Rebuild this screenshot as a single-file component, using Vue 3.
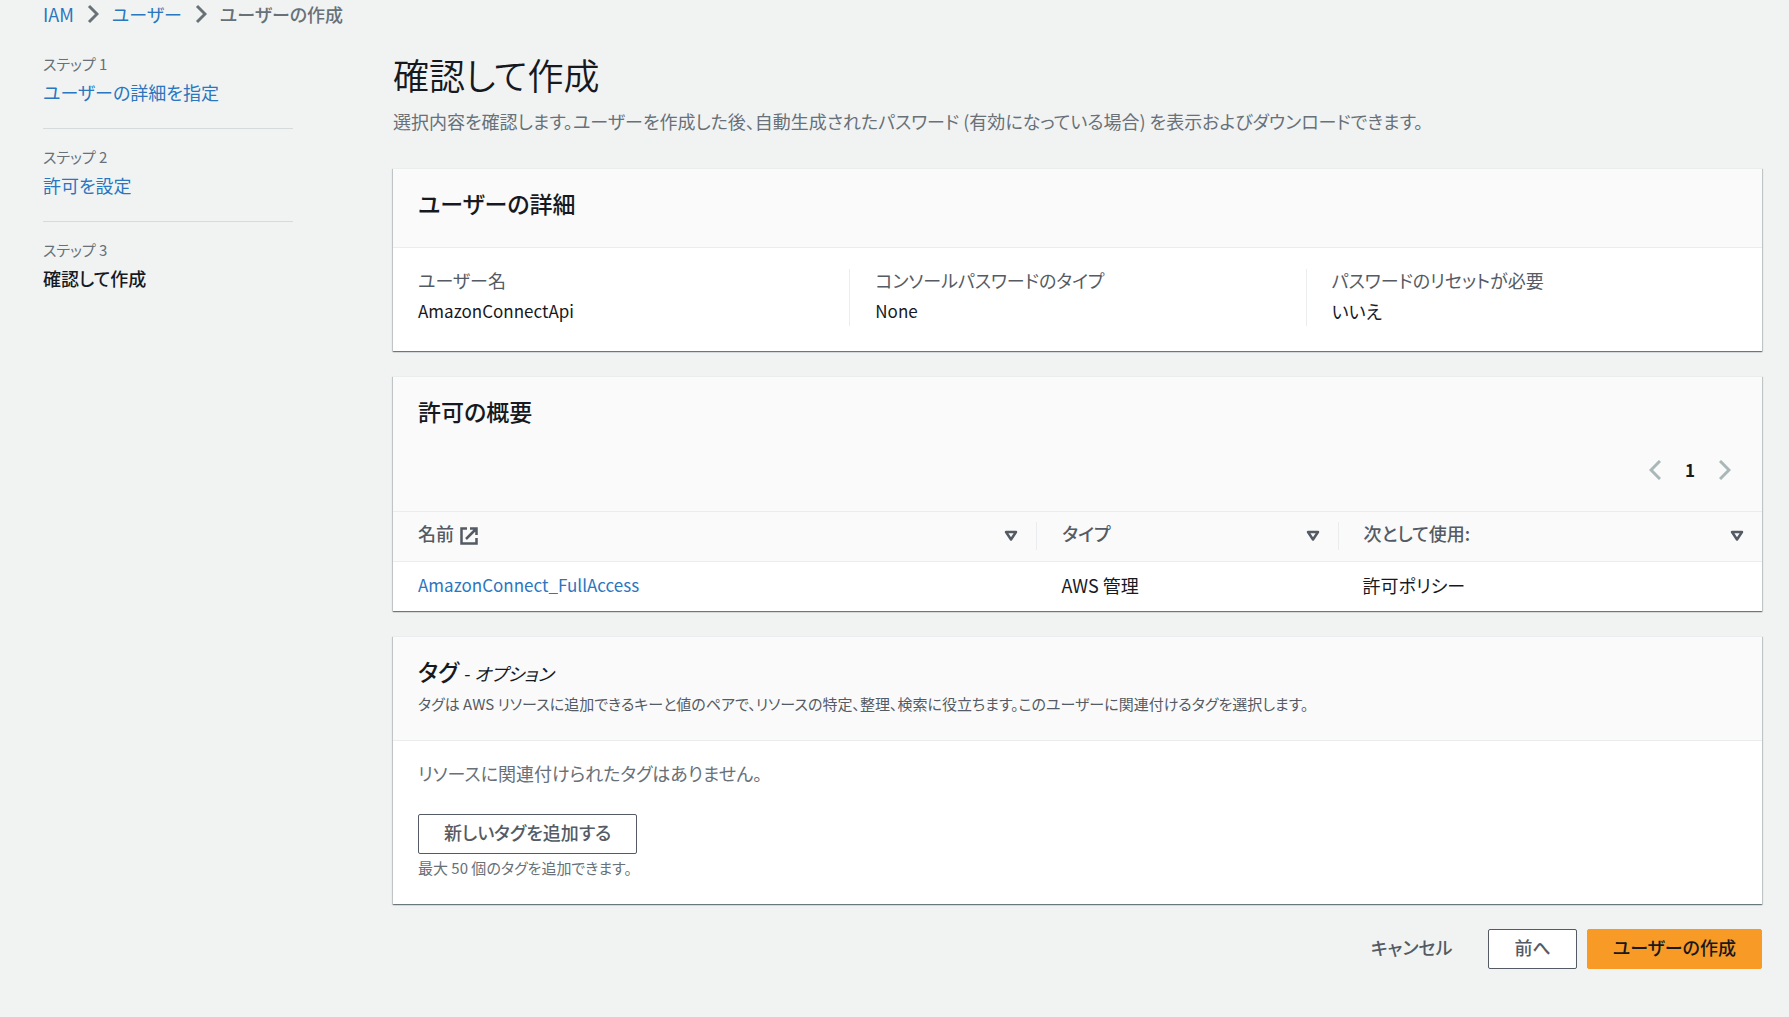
<script setup>
const steps = [
  { label: 'ステップ 1', title: 'ユーザーの詳細を指定', current: false },
  { label: 'ステップ 2', title: '許可を設定', current: false },
  { label: 'ステップ 3', title: '確認して作成', current: true },
]

const details = [
  { label: 'ユーザー名', value: 'AmazonConnectApi', latin: true },
  { label: 'コンソールパスワードのタイプ', value: 'None', latin: true },
  { label: 'パスワードのリセットが必要', value: 'いいえ', latin: false },
]

const columns = [
  { key: 'name', title: '名前', external: true },
  { key: 'type', title: 'タイプ', external: false },
  { key: 'usage', title: '次として使用:', external: false },
]

const policies = [
  { name: 'AmazonConnect_FullAccess', type: 'AWS 管理', usage: '許可ポリシー' },
]
</script>

<template>
  <div class="page">
    <nav class="breadcrumbs" aria-label="breadcrumb">
      <a href="#">IAM</a>
      <svg class="crumb-sep" viewBox="0 0 12 20" aria-hidden="true"><path d="M2 2l8 8-8 8" /></svg>
      <a href="#">ユーザー</a>
      <svg class="crumb-sep" viewBox="0 0 12 20" aria-hidden="true"><path d="M2 2l8 8-8 8" /></svg>
      <span class="crumb-current">ユーザーの作成</span>
    </nav>

    <div class="layout">
      <ol class="steps">
        <li v-for="step in steps" :key="step.label" class="step">
          <span class="step-label">{{ step.label }}</span>
          <span v-if="step.current" class="step-title step-current">{{ step.title }}</span>
          <a v-else href="#" class="step-title">{{ step.title }}</a>
        </li>
      </ol>

      <main class="content">
        <header class="intro">
          <h1>確認して作成</h1>
          <p>選択内容を確認します。ユーザーを作成した後、自動生成されたパスワード (有効になっている場合) を表示およびダウンロードできます。</p>
        </header>

        <section class="card">
          <div class="card-header">
            <h2>ユーザーの詳細</h2>
          </div>
          <dl class="details">
            <div v-for="item in details" :key="item.label" class="detail">
              <dt>{{ item.label }}</dt>
              <dd :class="{ latin: item.latin }">{{ item.value }}</dd>
            </div>
          </dl>
        </section>

        <section class="card">
          <div class="card-header table-tools">
            <h2>許可の概要</h2>
            <div class="pagination">
              <button type="button" class="page-arrow" aria-label="前のページ" disabled>
                <svg viewBox="0 0 12 20"><path d="M11 1l-9 9 9 9" /></svg>
              </button>
              <button type="button" class="page-number">1</button>
              <button type="button" class="page-arrow" aria-label="次のページ" disabled>
                <svg viewBox="0 0 12 20"><path d="M1 1l9 9-9 9" /></svg>
              </button>
            </div>
          </div>
          <table class="policies">
            <colgroup>
              <col class="col-name" />
              <col class="col-type" />
              <col />
            </colgroup>
            <thead>
              <tr>
                <th v-for="column in columns" :key="column.key" scope="col">
                  <div class="head-cell">
                    <span class="head-title">{{ column.title }}</span>
                    <svg v-if="column.external" class="external" viewBox="0 0 18 18" aria-hidden="true">
                      <path d="M7 1.5H1.5v15h15V11M10 1.5h6.5V8M16 2L6 12" />
                    </svg>
                    <svg class="sort" viewBox="0 0 14 12" aria-hidden="true">
                      <path d="M2 2h10L7 9.5z" />
                    </svg>
                  </div>
                </th>
              </tr>
            </thead>
            <tbody>
              <tr v-for="policy in policies" :key="policy.name">
                <td><a href="#" class="latin">{{ policy.name }}</a></td>
                <td>{{ policy.type }}</td>
                <td>{{ policy.usage }}</td>
              </tr>
            </tbody>
          </table>
        </section>

        <section class="card">
          <div class="card-header tags-header">
            <h2>タグ <span class="optional">- <i>オプション</i></span></h2>
            <p>タグは AWS リソースに追加できるキーと値のペアで、リソースの特定、整理、検索に役立ちます。このユーザーに関連付けるタグを選択します。</p>
          </div>
          <div class="tags-body">
            <p class="empty">リソースに関連付けられたタグはありません。</p>
            <button type="button" class="button">新しいタグを追加する</button>
            <p class="hint">最大 50 個のタグを追加できます。</p>
          </div>
        </section>

        <footer class="actions">
          <button type="button" class="button button-link">キャンセル</button>
          <button type="button" class="button">前へ</button>
          <button type="button" class="button button-primary">ユーザーの作成</button>
        </footer>
      </main>
    </div>
  </div>
</template>

<style>
body {
  margin: 0;
  background: #f1f3f3;
}
</style>

<style scoped>
.page {
  box-sizing: border-box;
  min-height: 100vh;
  padding: 0 27px 24px 43px;
  background: #f1f3f3;
  color: #16191f;
  font-family: "Noto Sans CJK JP", "Noto Sans", sans-serif;
  font-size: 18px;
  line-height: 28px;
  font-feature-settings: "palt";
}

h1, h2, p, dl, dd, ol {
  margin: 0;
  padding: 0;
}

a {
  color: #2a76bf;
  text-decoration: none;
}

svg {
  display: block;
  flex: none;
  fill: none;
  stroke: currentColor;
}

.latin {
  font-size: 17px;
}

.breadcrumbs {
  display: flex;
  align-items: center;
  gap: 13px;
  color: #687078;
}

.crumb-sep {
  width: 12px;
  height: 20px;
  stroke-width: 3;
}

.crumb-current {
  font-weight: 500;
}

.layout {
  display: grid;
  grid-template-columns: 250px minmax(0, 1fr);
  column-gap: 100px;
}

.steps {
  list-style: none;
  padding-top: 26px;
}

.step {
  display: flex;
  flex-direction: column;
  gap: 4px;
  padding-bottom: 22px;
}

.step + .step {
  padding-top: 18px;
  border-top: 1px solid #d5dbdb;
}

.step-label {
  font-size: 15px;
  line-height: 20px;
  color: #687078;
}

.step-current {
  font-weight: 500;
}

.content {
  padding-top: 24px;
}

.intro {
  margin-bottom: 33px;
}

h1 {
  font-size: 36px;
  line-height: 44px;
  font-weight: 350;
  margin-bottom: 11px;
}

.intro p {
  color: #687078;
}

h2 {
  font-size: 23px;
  line-height: 28px;
  font-weight: 500;
}

.card {
  margin-bottom: 25px;
  background: #fff;
  border-top: 1px solid #eaeded;
  box-shadow: 0 1px 1px rgba(0, 28, 36, 0.4), 1px 1px 1px rgba(0, 28, 36, 0.15), -1px 1px 1px rgba(0, 28, 36, 0.15);
}

.card-header {
  padding: 20px 25px 30px;
  background: #fafafa;
  border-bottom: 1px solid #eaeded;
}

.details {
  display: grid;
  grid-template-columns: repeat(3, minmax(0, 1fr));
  padding: 21px 0 25px;
}

.detail {
  padding: 0 25px;
  height: 57px;
}

.detail + .detail {
  border-left: 1px solid #eaeded;
}

.detail dt {
  margin-top: -3px;
  margin-bottom: 3px;
  color: #545b64;
}

.table-tools {
  padding-bottom: 27px;
}

.pagination {
  display: flex;
  justify-content: flex-end;
  align-items: center;
  gap: 24px;
  margin-top: 31px;
  padding-right: 6px;
}

.pagination button {
  padding: 0;
  border: 0;
  background: none;
  font: inherit;
  line-height: 28px;
}

.page-arrow {
  color: #aab7b8;
}

.page-arrow svg {
  width: 12px;
  height: 20px;
  stroke-width: 3;
}

.pagination .page-number {
  color: #16191f;
  font-size: 17px;
  font-weight: 700;
}

.policies {
  width: 100%;
  table-layout: fixed;
  border-collapse: collapse;
}

.col-name {
  width: 47%;
}

.col-type {
  width: 22%;
}

.policies th {
  padding: 10px 0 11px;
  background: #fafafa;
  border-bottom: 1px solid #eaeded;
  color: #545b64;
  font-weight: 500;
  text-align: left;
}

.head-cell {
  display: flex;
  align-items: center;
  padding: 0 18px 0 25px;
}

.head-title {
  line-height: 22px;
  padding-bottom: 6px;
}

th + th .head-cell {
  border-left: 1px solid #eaeded;
}

.external {
  width: 18px;
  height: 18px;
  margin-left: 6px;
  stroke-width: 2.5;
}

.sort {
  width: 14px;
  height: 12px;
  margin-left: auto;
  stroke-width: 2.5;
  stroke-linejoin: round;
}

.policies td {
  padding: 8px 25px 12px;
}

.tags-header {
  padding-bottom: 26px;
}

.tags-header p {
  margin-top: 9px;
  font-size: 15px;
  line-height: 20px;
  color: #545b64;
}

.optional {
  font-size: 18px;
  line-height: 20px;
  font-weight: 400;
}

.tags-body {
  padding: 18px 25px 26px;
}

.empty {
  color: #687078;
  margin-bottom: 27px;
}

.button {
  box-sizing: border-box;
  display: block;
  height: 40px;
  padding: 0 25px 4px;
  border: 1px solid #545b64;
  border-radius: 2px;
  background: #fff;
  color: #545b64;
  font: inherit;
  font-weight: 500;
  font-feature-settings: inherit;
}

.hint {
  margin-top: 4px;
  font-size: 15px;
  line-height: 20px;
  color: #687078;
}

.actions {
  display: flex;
  justify-content: flex-end;
  gap: 10px;
}

.button-link {
  border-color: transparent;
  background: transparent;
}

.button-primary {
  border-color: #f79a26;
  background: #f79a26;
  color: #16191f;
}
</style>
